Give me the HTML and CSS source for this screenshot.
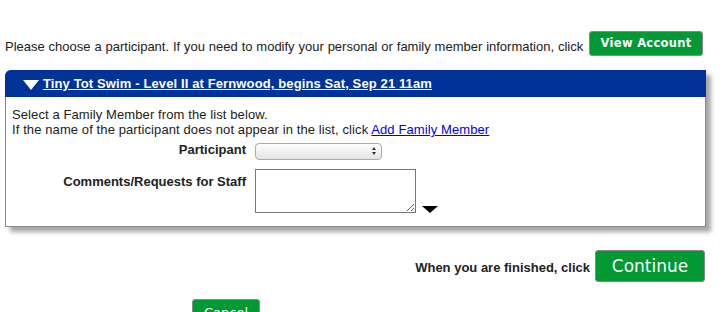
FILE: index.html
```html
<!DOCTYPE html>
<html lang="en">
<head>
    <meta charset="UTF-8">
    <title>Choose a Participant</title>
    <link rel="stylesheet" href="styles.css">
</head>
<body>
    <div class="page">
        <p class="intro">
            Please choose a participant. If you need to modify your personal or family member information, click
            <a class="btn btn-small" href="#">View Account</a>
        </p>

        <div class="panel">
            <div class="panel-head">
                <span class="arrow"></span>
                <a href="#">Tiny Tot Swim - Level II at Fernwood, begins Sat, Sep 21 11am</a>
            </div>
            <div class="panel-body">
                <p>Select a Family Member from the list below.<br>
                If the name of the participant does not appear in the list, click <a href="#">Add Family Member</a></p>

                <div class="form-grid">
                    <label class="lbl">Participant</label>
                    <div class="select-wrap">
                        <select class="select"><option></option></select>
                        <span class="updown"></span>
                    </div>

                    <label class="lbl">Comments/Requests for Staff</label>
                    <div class="comments">
                        <textarea></textarea>
                        <span class="arrow-dark"></span>
                    </div>
                </div>
            </div>
        </div>

        <div class="finish">
            <b>When you are finished, click</b>
            <a class="btn btn-big" href="#">Continue</a>
        </div>

        <div class="cancel-row">
            <a class="btn btn-cancel" href="#">Cancel</a>
        </div>
    </div>
</body>
</html>
```

FILE: styles.css
```css
body {
    margin: 0;
    padding: 0;
    font-family: "Liberation Sans", Arial, sans-serif;
    font-size: 13px;
    color: #222;
    background: #fff;
}

.page {
    padding: 31px 23px 0 5px;
}

.intro {
    margin: 0;
    line-height: 16px;
    white-space: nowrap;
    word-spacing: 0.25px;
}

/* botones verdes */
.btn {
    display: inline-block;
    background: #009933;
    color: #fff;
    text-decoration: none;
    border: 1px solid #8a8a8a;
    border-radius: 3px;
    font-family: "DejaVu Sans", Verdana, sans-serif;
    text-align: center;
    word-spacing: 0;
}

.btn-small {
    width: 112px;
    height: 23px;
    line-height: 22px;
    font-size: 11.5px;
    font-weight: bold;
    margin-left: 2px;
    letter-spacing: 0.3px;
    vertical-align: 4px;
}

.btn-big {
    width: 108px;
    height: 30px;
    line-height: 31px;
    font-size: 17px;
}

.btn-cancel {
    width: 66px;
    height: 24px;
    line-height: 26px;
    font-size: 13px;
}

.panel {
    margin-top: 14px;
    width: 699px;
    border: 1px solid #888;
    border-top: none;
    border-radius: 6px 0 0 0;
    box-shadow: 5px 5px 4px rgba(0, 0, 0, 0.35);
}

.panel-head {
    background: #003399;
    height: 27px;
    display: flex;
    align-items: center;
    padding-left: 18px;
    border-radius: 6px 0 0 0;
    margin: 0 -1px 0 -1px;
}

.panel-head a {
    color: #fff;
    font-weight: bold;
    font-size: 13px;
    margin-left: 4px;
    letter-spacing: 0.12px;
}

.arrow {
    width: 0;
    height: 0;
    border-left: 8px solid transparent;
    border-right: 8px solid transparent;
    border-top: 10px solid #fff;
    margin-top: 2px;
}

.panel-body {
    padding: 10px 0 13px 6px;
}

.panel-body p {
    margin: 0;
    line-height: 15px;
    letter-spacing: 0.1px;
}

.panel-body a {
    color: #0000ee;
}

.form-grid {
    display: grid;
    grid-template-columns: 234px auto;
    column-gap: 9px;
    row-gap: 9px;
}

.lbl {
    text-align: right;
    font-weight: bold;
    padding-top: 5px;
}

.select-wrap {
    position: relative;
    width: 127px;
    margin-top: 6px;
}

.select {
    display: block;
    width: 127px;
    height: 17px;
    border: 1px solid #aaa;
    border-radius: 4px;
    background: linear-gradient(#fdfdfd, #e4e4e4);
    font-size: 11px;
    appearance: none;
    -webkit-appearance: none;
}

/* flechitas arriba/abajo del select */
.updown::before,
.updown::after {
    content: "";
    position: absolute;
    right: 6px;
    border-left: 2.5px solid transparent;
    border-right: 2.5px solid transparent;
}

.updown::before {
    top: 4px;
    border-bottom: 3px solid #333;
}

.updown::after {
    top: 9px;
    border-top: 3px solid #333;
}

.comments {
    display: flex;
    align-items: flex-end;
}

.comments textarea {
    width: 157px;
    height: 40px;
    margin: 0;
    padding: 1px;
    border: 1px solid #777;
    resize: both;
}

.arrow-dark {
    width: 0;
    height: 0;
    border-left: 8px solid transparent;
    border-right: 8px solid transparent;
    border-top: 7px solid #000;
    margin-left: 6px;
}

.finish {
    margin-top: 23px;
    display: flex;
    justify-content: flex-end;
    align-items: center;
    gap: 5px;
}

.finish b {
    margin-top: 2px;
}

.cancel-row {
    margin-top: 17px;
    padding-left: 187px;
}
```
